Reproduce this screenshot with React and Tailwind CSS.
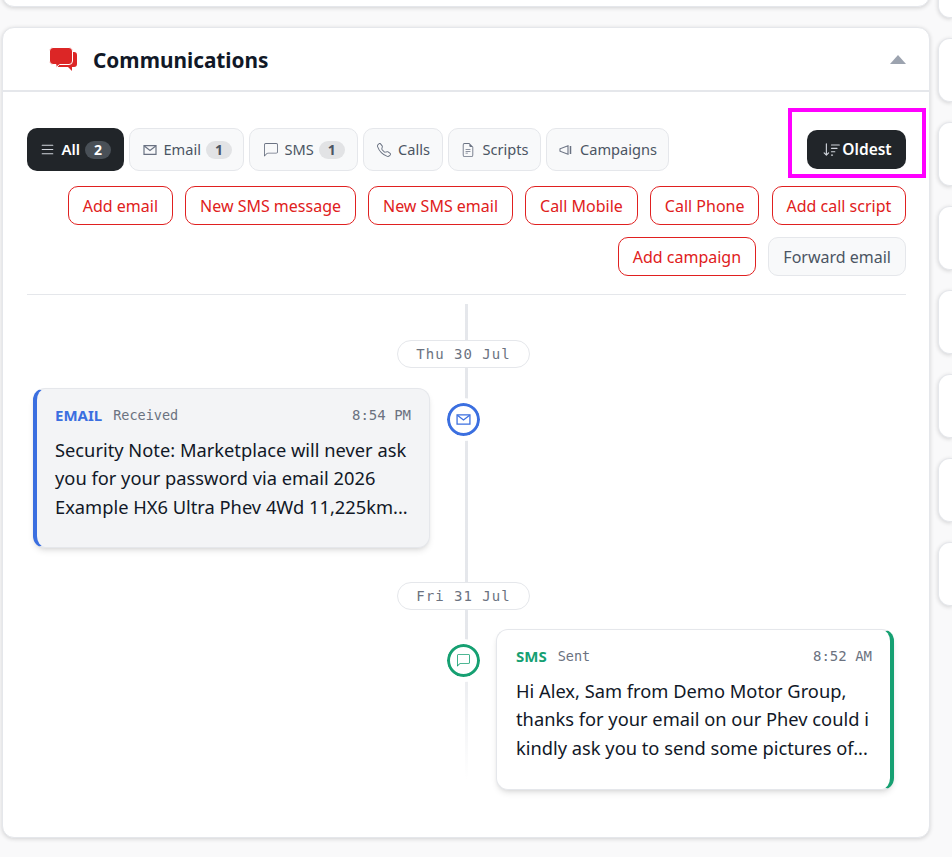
import { BsChatLeft, BsFileEarmarkText, BsList, BsSortDown, BsTelephone } from 'react-icons/bs';

const sans = 'font-["Noto_Sans","Open_Sans",sans-serif]';
const mono = "font-['DejaVu_Sans_Mono',monospace]";
const cardShadow = 'shadow-[0_1px_4px_rgba(0,0,0,0.16)]';

function MailIcon({ size = 14, className }) {
  return (
    <svg viewBox="0 0 14 14" width={size} height={size} fill="none" stroke="currentColor" strokeWidth="1.2" className={className}>
      <path d="M1 2.600h12v8.800H1z" />
      <path d="M1.300 3l5.700 4.500L12.700 3" />
    </svg>
  );
}

function CampaignIcon({ size = 14, className }) {
  return (
    <svg viewBox="0 0 14 14" width={size} height={size} fill="none" stroke="currentColor" strokeWidth="1.1" className={className}>
      <path d="M1 5.800v2.400l8 3V2.800z" />
      <path d="M11.500 3v8" strokeWidth="1.500" />
    </svg>
  );
}

const tabs = [
  { label: 'Email', count: 1, icon: MailIcon, width: 'w-[115.500px]' },
  { label: 'SMS', count: 1, icon: BsChatLeft, width: 'w-[108.500px]' },
  { label: 'Calls', icon: BsTelephone, width: 'w-[80px]' },
  { label: 'Scripts', icon: BsFileEarmarkText, width: 'w-[93px]' },
  { label: 'Campaigns', icon: CampaignIcon, width: 'w-[123px]' },
];

function ActionButton({ children, muted }) {
  return (
    <button
      className={
        muted
          ? 'h-[39px] px-[14px] rounded-[10px] border border-gray-200 bg-[#f8f9fa] text-[#4b5563] text-base'
          : 'h-[39px] px-[13.700px] rounded-[10px] border border-[#e02020] bg-white text-[#e02020] text-base'
      }
    >
      {children}
    </button>
  );
}

function DatePill({ children }) {
  return (
    <div className={`relative z-10 flex justify-center w-[133px] ml-[370px] h-[28px] items-center rounded-full border border-gray-200 bg-white ${mono} text-sm tracking-[1px] text-[#6b7280]`}>
      {children}
    </div>
  );
}

function App() {
  return (
    <div className={`${sans} w-[952px] h-[857px] overflow-hidden bg-[#f9f9fa] relative`}>
      <div className="flex gap-2 -mt-[60px] pl-[2px]">
        <div className="w-[928px] shrink-0">
          <div className={`h-[67px] bg-white rounded-xl border border-gray-200 ${cardShadow}`} />
          <section className={`mt-5 h-[811px] bg-white rounded-xl border border-gray-200 ${cardShadow}`}>
            <header className="h-[64px] flex items-center justify-between border-b-2 border-gray-200 pl-[46px] pr-[23px]">
              <div className="flex items-center gap-[16px]">
                <svg viewBox="0 0 28 24" className="w-[28px] h-[24px]" fill="#dc2626">
                  <path d="M11 5h14a3 3 0 0 1 3 3v9a3 3 0 0 1-3 3h-2v4l-4-4H9z" />
                  <path d="M4 .500h16a3.500 3.500 0 0 1 3.500 3.500v10a3.500 3.500 0 0 1-3.500 3.500H10.500L7 20.500v-3H4A3.500 3.500 0 0 1 .500 14V4A3.500 3.500 0 0 1 4 .500z" stroke="#ffffff" strokeWidth="1" />
                </svg>
                <h2 className="pt-1 text-[20.800px] font-bold text-[#111827]">Communications</h2>
              </div>
              <div className="w-0 h-0 border-x-8 border-x-transparent border-b-[9px] border-b-[#9ca3af]" />
            </header>

            <div className="pl-6 pr-[23px] pt-9">
              <div className="flex justify-between items-center">
                <div className="flex gap-[5px]">
                  <button className="h-[43px] w-[96.500px] rounded-[10px] bg-[#212529] text-white text-[15px] font-semibold flex items-center justify-center gap-[5px]">
                    <BsList size={17} className="text-gray-300" />
                    All
                    <span className="h-[18px] w-[26px] rounded-full bg-[#495057] text-sm font-bold leading-[18px]">2</span>
                  </button>
                  {tabs.map((tab) => (
                    <button
                      key={tab.label}
                      className={`h-[43px] ${tab.width} pl-[2px] rounded-[10px] border border-gray-200 bg-[#f8f9fa] text-[#4b5563] text-[14.600px] flex items-center justify-center gap-[7px]`}
                    >
                      <tab.icon size={14} className="text-gray-500" />
                      {tab.label}
                      {tab.count && (
                        <span className="-ml-[2px] h-[18px] w-[26px] rounded-full bg-[#e2e3e5] text-sm font-bold leading-[18px]">{tab.count}</span>
                      )}
                    </button>
                  ))}
                </div>
                <button className="h-[39px] w-[99px] pl-[2px] pt-[1px] rounded-[10px] bg-[#212529] text-white text-[15.500px] font-semibold flex items-center justify-center gap-[1px]">
                  <BsSortDown size={18} className="text-gray-300" />
                  Oldest
                </button>
              </div>

              <div className="mt-[15px] flex flex-wrap justify-end gap-x-[12.600px] gap-y-3">
                <ActionButton>Add email</ActionButton>
                <ActionButton>New SMS message</ActionButton>
                <ActionButton>New SMS email</ActionButton>
                <ActionButton>Call Mobile</ActionButton>
                <ActionButton>Call Phone</ActionButton>
                <ActionButton>Add call script</ActionButton>
                <ActionButton>Add campaign</ActionButton>
                <ActionButton muted>Forward email</ActionButton>
              </div>

              <div className="mt-[18px] border-t border-gray-200 relative pt-[45px]">
                <div className="absolute left-[438px] top-[9px] h-[475px] w-[3px] bg-gradient-to-b from-gray-200 via-gray-200 via-[72%] to-transparent" />
                <DatePill>Thu 30 Jul</DatePill>

                <div className="relative mt-[20px] h-[160px] w-[397px] ml-[6px] rounded-xl border border-gray-200 border-l-4 border-l-[#3b6fe0] bg-[#f3f4f6] shadow-md pl-[18px] pr-[18px] pt-[15px]">
                  <div className="flex items-center justify-between">
                    <div className="flex items-center gap-[11px]">
                      <span className="text-[15px] font-bold text-[#3b6fe0]">EMAIL</span>
                      <span className={`${mono} text-[13.500px] text-[#6b7280]`}>Received</span>
                    </div>
                    <span className={`${mono} text-sm text-[#6b7280]`}>8:54 PM</span>
                  </div>
                  <p className="mt-[9px] text-[18.300px] leading-[28.500px] text-[#111827]">
                    Security Note: Marketplace will never ask you for your password via email 2026 Example HX6 Ultra Phev 4Wd 11,225km...
                  </p>
                  <div className="absolute -right-[51px] top-[14px] w-[33px] h-[33px] rounded-full border-[3px] border-[#3b6fe0] bg-white outline-[5px] outline-white flex items-center justify-center">
                    <MailIcon size={15} className="text-[#3b6fe0]" />
                  </div>
                </div>

                <div className="mt-[34px]">
                  <DatePill>Fri 31 Jul</DatePill>
                </div>

                <div className="relative mt-[19px] h-[161px] w-[398px] ml-[469px] rounded-xl border border-gray-200 border-r-4 border-r-[#16a072] bg-white shadow-md pl-[19px] pr-[18px] pt-[15px]">
                  <div className="flex items-center justify-between">
                    <div className="flex items-center gap-[11px]">
                      <span className="text-[15px] font-bold text-[#16a072]">SMS</span>
                      <span className={`${mono} text-[13.500px] text-[#6b7280]`}>Sent</span>
                    </div>
                    <span className={`${mono} text-sm text-[#6b7280]`}>8:52 AM</span>
                  </div>
                  <p className="mt-[9px] text-[18.300px] leading-[28.500px] text-[#111827]">
                    Hi Alex, Sam from Demo Motor Group, thanks for your email on our Phev could i kindly ask you to send some pictures of...
                  </p>
                  <div className="absolute -left-[50px] top-[14px] w-[33px] h-[33px] rounded-full border-[3px] border-[#16a072] bg-white outline-[5px] outline-white flex items-center justify-center">
                    <BsChatLeft size={13} className="text-[#16a072]" />
                  </div>
                </div>
              </div>
            </div>
          </section>
        </div>

        <div className="flex-1 flex flex-col gap-5 pt-[14px]">
          {Array.from({ length: 8 }).map((_, i) => (
            <div key={i} className={`h-[64px] bg-white rounded-l-xl border border-r-0 border-gray-200 ${cardShadow}`} />
          ))}
        </div>
      </div>

      <div className="absolute left-[788px] top-[108px] w-[138px] h-[70px] border-4 border-[#ff00ff] pointer-events-none" />
    </div>
  );
}

export default App;
